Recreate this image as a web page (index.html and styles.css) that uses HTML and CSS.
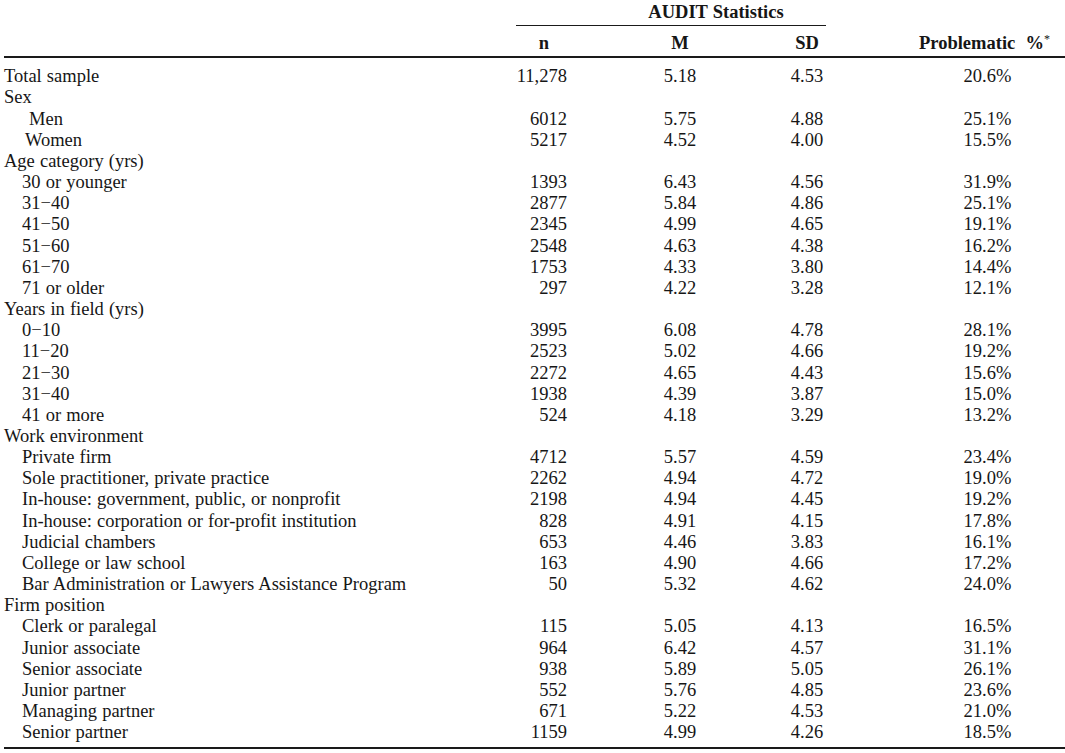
FILE: index.html
```html
<!DOCTYPE html>
<html>
<head>
<meta charset="utf-8">
<link rel="stylesheet" href="styles.css">
</head>
<body>
<table class="stats">
  <colgroup>
    <col class="c-label">
    <col class="c-n">
    <col class="c-m">
    <col class="c-sd">
    <col class="c-p">
  </colgroup>
  <thead>
    <tr class="h1">
      <th></th>
      <th colspan="3" class="group">AUDIT Statistics</th>
      <th></th>
    </tr>
    <tr class="h2">
      <th></th>
      <th class="n">n</th>
      <th class="m">M</th>
      <th class="sd">SD</th>
      <th class="p">Problematic&nbsp; %<sup>*</sup></th>
    </tr>
  </thead>
  <tbody>
    <tr class="first"><td class="lab">Total sample</td><td class="n">11,278</td><td class="m">5.18</td><td class="sd">4.53</td><td class="p">20.6%</td></tr>
    <tr><td class="lab">Sex</td><td></td><td></td><td></td><td></td></tr>
    <tr><td class="lab sub men">Men</td><td class="n">6012</td><td class="m">5.75</td><td class="sd">4.88</td><td class="p">25.1%</td></tr>
    <tr><td class="lab sub women">Women</td><td class="n">5217</td><td class="m">4.52</td><td class="sd">4.00</td><td class="p">15.5%</td></tr>
    <tr><td class="lab">Age category (yrs)</td><td></td><td></td><td></td><td></td></tr>
    <tr><td class="lab sub">30 or younger</td><td class="n">1393</td><td class="m">6.43</td><td class="sd">4.56</td><td class="p">31.9%</td></tr>
    <tr><td class="lab sub">31−40</td><td class="n">2877</td><td class="m">5.84</td><td class="sd">4.86</td><td class="p">25.1%</td></tr>
    <tr><td class="lab sub">41−50</td><td class="n">2345</td><td class="m">4.99</td><td class="sd">4.65</td><td class="p">19.1%</td></tr>
    <tr><td class="lab sub">51−60</td><td class="n">2548</td><td class="m">4.63</td><td class="sd">4.38</td><td class="p">16.2%</td></tr>
    <tr><td class="lab sub">61−70</td><td class="n">1753</td><td class="m">4.33</td><td class="sd">3.80</td><td class="p">14.4%</td></tr>
    <tr><td class="lab sub">71 or older</td><td class="n">297</td><td class="m">4.22</td><td class="sd">3.28</td><td class="p">12.1%</td></tr>
    <tr><td class="lab">Years in field (yrs)</td><td></td><td></td><td></td><td></td></tr>
    <tr><td class="lab sub">0−10</td><td class="n">3995</td><td class="m">6.08</td><td class="sd">4.78</td><td class="p">28.1%</td></tr>
    <tr><td class="lab sub">11−20</td><td class="n">2523</td><td class="m">5.02</td><td class="sd">4.66</td><td class="p">19.2%</td></tr>
    <tr><td class="lab sub">21−30</td><td class="n">2272</td><td class="m">4.65</td><td class="sd">4.43</td><td class="p">15.6%</td></tr>
    <tr><td class="lab sub">31−40</td><td class="n">1938</td><td class="m">4.39</td><td class="sd">3.87</td><td class="p">15.0%</td></tr>
    <tr><td class="lab sub">41 or more</td><td class="n">524</td><td class="m">4.18</td><td class="sd">3.29</td><td class="p">13.2%</td></tr>
    <tr><td class="lab">Work environment</td><td></td><td></td><td></td><td></td></tr>
    <tr><td class="lab sub">Private firm</td><td class="n">4712</td><td class="m">5.57</td><td class="sd">4.59</td><td class="p">23.4%</td></tr>
    <tr><td class="lab sub">Sole practitioner, private practice</td><td class="n">2262</td><td class="m">4.94</td><td class="sd">4.72</td><td class="p">19.0%</td></tr>
    <tr><td class="lab sub">In-house: government, public, or nonprofit</td><td class="n">2198</td><td class="m">4.94</td><td class="sd">4.45</td><td class="p">19.2%</td></tr>
    <tr><td class="lab sub">In-house: corporation or for-profit institution</td><td class="n">828</td><td class="m">4.91</td><td class="sd">4.15</td><td class="p">17.8%</td></tr>
    <tr><td class="lab sub">Judicial chambers</td><td class="n">653</td><td class="m">4.46</td><td class="sd">3.83</td><td class="p">16.1%</td></tr>
    <tr><td class="lab sub">College or law school</td><td class="n">163</td><td class="m">4.90</td><td class="sd">4.66</td><td class="p">17.2%</td></tr>
    <tr><td class="lab sub">Bar Administration or Lawyers Assistance Program</td><td class="n">50</td><td class="m">5.32</td><td class="sd">4.62</td><td class="p">24.0%</td></tr>
    <tr><td class="lab">Firm position</td><td></td><td></td><td></td><td></td></tr>
    <tr><td class="lab sub">Clerk or paralegal</td><td class="n">115</td><td class="m">5.05</td><td class="sd">4.13</td><td class="p">16.5%</td></tr>
    <tr><td class="lab sub">Junior associate</td><td class="n">964</td><td class="m">6.42</td><td class="sd">4.57</td><td class="p">31.1%</td></tr>
    <tr><td class="lab sub">Senior associate</td><td class="n">938</td><td class="m">5.89</td><td class="sd">5.05</td><td class="p">26.1%</td></tr>
    <tr><td class="lab sub">Junior partner</td><td class="n">552</td><td class="m">5.76</td><td class="sd">4.85</td><td class="p">23.6%</td></tr>
    <tr><td class="lab sub">Managing partner</td><td class="n">671</td><td class="m">5.22</td><td class="sd">4.53</td><td class="p">21.0%</td></tr>
    <tr class="last"><td class="lab sub">Senior partner</td><td class="n">1159</td><td class="m">4.99</td><td class="sd">4.26</td><td class="p">18.5%</td></tr>
  </tbody>
</table>
</body>
</html>
```
FILE: styles.css
```css
html, body {
  margin: 0;
  padding: 0;
  background: #ffffff;
}

body {
  padding-left: 4px;
  font-family: "Liberation Serif", "Times New Roman", serif;
  font-size: 18.5px;
  word-spacing: 0.5px;
  color: #161616;
}

.stats {
  width: 1061px;
  table-layout: fixed;
  border-collapse: collapse;
  border-spacing: 0;
}

.c-label { width: 512px; }
.c-n { width: 56px; }
.c-m { width: 216px; }
.c-sd { width: 38px; }
.c-p { width: 239px; }

.stats th,
.stats td {
  padding: 0;
  line-height: 21.16px;
  white-space: nowrap;
  font-weight: normal;
}

.stats th {
  font-weight: bold;
}

.h1 th {
  padding-top: 2px;
  padding-bottom: 2px;
  height: 21px;
}

.h1 .group {
  text-align: center;
  border-bottom: 1.5px solid #1a1a1a;
  padding-left: 120px;
  padding-right: 30px;
}

.h2 th {
  padding-top: 7px;
  padding-bottom: 2px;
  border-bottom: 2px solid #1a1a1a;
}

.h2 .n { text-align: center; padding-left: 0; }
.h2 .m { text-align: center; }
.h2 .sd { text-align: center; }
.h2 .p { text-align: center; padding-left: 78px; }

.h2 sup {
  font-weight: normal;
  font-size: 12px;
  vertical-align: 6px;
  line-height: 0;
}

td.lab { text-align: left; }
td.sub { padding-left: 18px; }
td.men { padding-left: 25px; }
td.women { padding-left: 21px; }

td.n { text-align: right; padding-right: 5px; }
td.m { text-align: center; }
td.sd { text-align: center; }
td.p { text-align: center; padding-left: 84px; }

tr.first td { padding-top: 8px; }
tr.last td {
  padding-bottom: 4px;
  border-bottom: 2px solid #1a1a1a;
}
```
